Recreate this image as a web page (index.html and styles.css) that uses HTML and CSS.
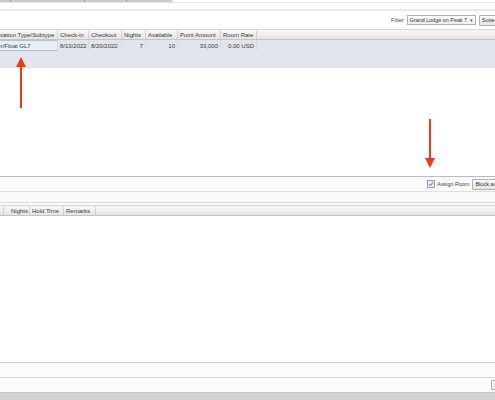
FILE: index.html
```html
<!DOCTYPE html>
<html lang="en">
  <head>
    <meta charset="UTF-8" />
    <meta name="viewport" content="width=device-width, initial-scale=1.0" />
    <title>Room Block</title>
    <link rel="stylesheet" href="styles.css">
  </head>
  <body>
    <div class="screen">
      <div class="tabstrip">
        <span class="tab w11"></span>
        <span class="tab w74"></span>
        <span class="tab w42"></span>
        <span class="tab w46"></span>
      </div>
      <div class="gap6"></div>
      <div class="rule"></div>

      <div class="filterbar">
        <span class="filter-label">Filter:</span>
        <div class="select">
          <span>Grand Lodge on Peak 7</span>
          <span class="caret">&#9662;</span>
        </div>
        <button class="btn">Suite Studio</button>
      </div>

      <div class="grid top-grid">
        <div class="grid-head">
          <div class="cell c-type">Reservation Type/Subtype</div>
          <div class="cell c-date">Check-in</div>
          <div class="cell c-date2">Checkout</div>
          <div class="cell c-nights">Nights</div>
          <div class="cell c-avail">Available</div>
          <div class="cell c-points">Point Amount</div>
          <div class="cell c-rate">Room Rate</div>
          <div class="cell filler"></div>
        </div>
        <div class="grid-body shaded">
          <div class="grid-row">
            <div class="cell c-type selected">Owner/Float GL7</div>
            <div class="cell c-date">8/13/2022</div>
            <div class="cell c-date2">8/20/2022</div>
            <div class="cell c-nights num">7</div>
            <div class="cell c-avail num">10</div>
            <div class="cell c-points num">33,000</div>
            <div class="cell c-rate num">0.00 USD</div>
          </div>
        </div>
      </div>

      <div class="spacer"></div>

      <div class="toolbar">
        <label class="check">
          <span class="box">
            <svg width="6" height="6" viewBox="0 0 6 6"><path d="M1 3.2 L2.4 4.6 L5 1.2" fill="none" stroke="#3c5878" stroke-width="0.9"/></svg>
          </span>
          Assign Room
        </label>
        <button class="btn">Block and Assign</button>
      </div>

      <div class="band"></div>
      <div class="gap2"></div>

      <div class="grid bottom-grid">
        <div class="grid-head">
          <div class="cell b-first"></div>
          <div class="cell b-nights">Nights</div>
          <div class="cell b-hold">Hold Time</div>
          <div class="cell b-remarks">Remarks</div>
          <div class="cell filler"></div>
        </div>
        <div class="grid-body plain"></div>
      </div>

      <div class="footbar"></div>
      <div class="footbar">
        <button class="mini"></button>
      </div>
      <div class="statusbar"></div>

      <!-- callout arrows -->
      <svg class="arrow arrow-up" width="12" height="52" viewBox="0 0 12 52">
        <polygon points="6,0 11,10 1,10" fill="#f2371a"/>
        <rect x="5" y="9" width="2" height="42" fill="#f2371a"/>
      </svg>
      <svg class="arrow arrow-down" width="12" height="50" viewBox="0 0 12 50">
        <rect x="5" y="0" width="2" height="41" fill="#f2371a"/>
        <polygon points="1,39 11,39 6,49" fill="#f2371a"/>
      </svg>
    </div>
  </body>
</html>
```

FILE: styles.css
```css
body {
  margin: 0;
  padding: 0;
  background-color: #fff;
  font-family: "Liberation Sans", Arial, sans-serif;
  font-size: 6px;
  color: #3a3a3a;
  overflow: hidden;
}

.screen {
  position: relative;
  width: 495px;
  height: 400px;
  overflow: hidden;
  display: flex;
  flex-direction: column;
}

/* top tab strip */
.tabstrip {
  display: flex;
  height: 2px;
  border-bottom: 1px solid #e4e4e4;
  flex-shrink: 0;
}

.tab {
  height: 2px;
  background-color: #cbcbcb;
  border-right: 1px solid #9c9c9c;
}

.tab.w11 { width: 10px; }
.tab.w74 { width: 73px; }
.tab.w42 { width: 41px; }
.tab.w46 { width: 45px; border-right: 1px solid #e0e0e0; }

.gap6 {
  height: 6px;
  flex-shrink: 0;
}

.rule {
  height: 2px;
  background-color: #e8e8e8;
  flex-shrink: 0;
}

/* filter bar */
.filterbar {
  height: 18px;
  display: flex;
  align-items: center;
  justify-content: flex-end;
  flex-shrink: 0;
  margin-right: -20px;
}

.filter-label {
  margin-right: 2px;
  font-size: 5.5px;
  color: #444;
}

.select {
  display: flex;
  align-items: center;
  justify-content: space-between;
  width: 63px;
  height: 8px;
  padding: 0 2px;
  border: 1px solid #b0b0b0;
  background: linear-gradient(#fdfdfd, #ececec);
  font-size: 5.4px;
  color: #333;
  white-space: nowrap;
  overflow: hidden;
}

.caret {
  font-size: 5px;
  color: #555;
}

.btn {
  height: 11px;
  margin-left: 3px;
  padding: 0 2px;
  border: 1px solid #b0b0b0;
  border-radius: 1px;
  background: linear-gradient(#fafafa, #e6e6e6);
  font-family: inherit;
  font-size: 5.6px;
  color: #333;
  white-space: nowrap;
  flex-shrink: 0;
}

/* grids */
.grid {
  flex-shrink: 0;
}

.grid-head {
  display: flex;
  height: 9px;
  border-top: 1px solid #d6d6d6;
  border-bottom: 1px solid #c4c4c4;
  background: linear-gradient(#f8f8f8, #e4e4e4);
}

.grid-row {
  display: flex;
  height: 11px;
}

.cell {
  box-sizing: border-box;
  padding: 0 2px;
  border-right: 1px solid #d2d2d2;
  white-space: nowrap;
  overflow: hidden;
  display: flex;
  align-items: center;
  flex-shrink: 0;
}

.cell.num {
  justify-content: flex-end;
}

.cell.filler {
  flex: 1;
  border-right: none;
}

.top-grid {
  margin-left: -19px;
}

.top-grid .grid-row .cell {
  border-right-color: #d6dbe2;
}

.c-type { width: 77px; padding-left: 3px; }
.c-date { width: 31px; }
.c-date2 { width: 33px; }
.c-nights { width: 24px; }
.c-avail { width: 32px; }
.c-points { width: 43px; }
.c-rate { width: 36px; }

.cell.selected {
  border: 1px solid #a9c6dc;
  background-color: #e9eef3;
}

.grid-body.shaded {
  height: 28px;
  background-color: #e1e6ec;
}

.spacer {
  height: 108px;
  flex-shrink: 0;
}

/* assign toolbar */
.toolbar {
  height: 14px;
  border-top: 1px solid #b3bcc7;
  border-bottom: 1px solid #ecdcd2;
  background-color: #fbfbfb;
  display: flex;
  align-items: center;
  justify-content: flex-end;
  flex-shrink: 0;
  margin-right: -26px;
}

.check {
  display: flex;
  align-items: center;
  font-size: 5.4px;
  color: #444;
}

.box {
  display: flex;
  width: 6px;
  height: 6px;
  margin-right: 2px;
  border: 1px solid #8ea4bc;
  background-color: #e6edf4;
}

.band {
  height: 10px;
  border-bottom: 1px solid #d8d8d8;
  background-color: #fafafa;
  flex-shrink: 0;
}

.gap2 {
  height: 2px;
  background-color: #fcfcfc;
  flex-shrink: 0;
}

.b-first { width: 4px; padding: 0; }
.b-nights { width: 26px; padding-left: 7px; }
.b-hold { width: 34px; }
.b-remarks { width: 32px; }

.grid-body.plain {
  height: 146px;
  background-color: #fff;
}

/* bottom bars */
.footbar {
  height: 14px;
  border-top: 1px solid #c6cbd1;
  background-color: #fbfbfb;
  display: flex;
  align-items: center;
  justify-content: flex-end;
  flex-shrink: 0;
}

.footbar + .footbar {
  border-top-color: #d6d6d6;
}

.mini {
  width: 10px;
  height: 10px;
  margin-right: -10px;
  border: 1px solid #b0b0b0;
  border-radius: 1px;
  background: linear-gradient(#fafafa, #e4e4e4);
  flex-shrink: 0;
}

.statusbar {
  height: 7px;
  border-top: 1px solid #c4c8cc;
  background-color: #d2d2d2;
  flex-shrink: 0;
}

/* callout arrows */
.arrow {
  position: absolute;
}

.arrow-up {
  left: 15px;
  top: 57px;
}

.arrow-down {
  left: 424px;
  top: 119px;
}
```
